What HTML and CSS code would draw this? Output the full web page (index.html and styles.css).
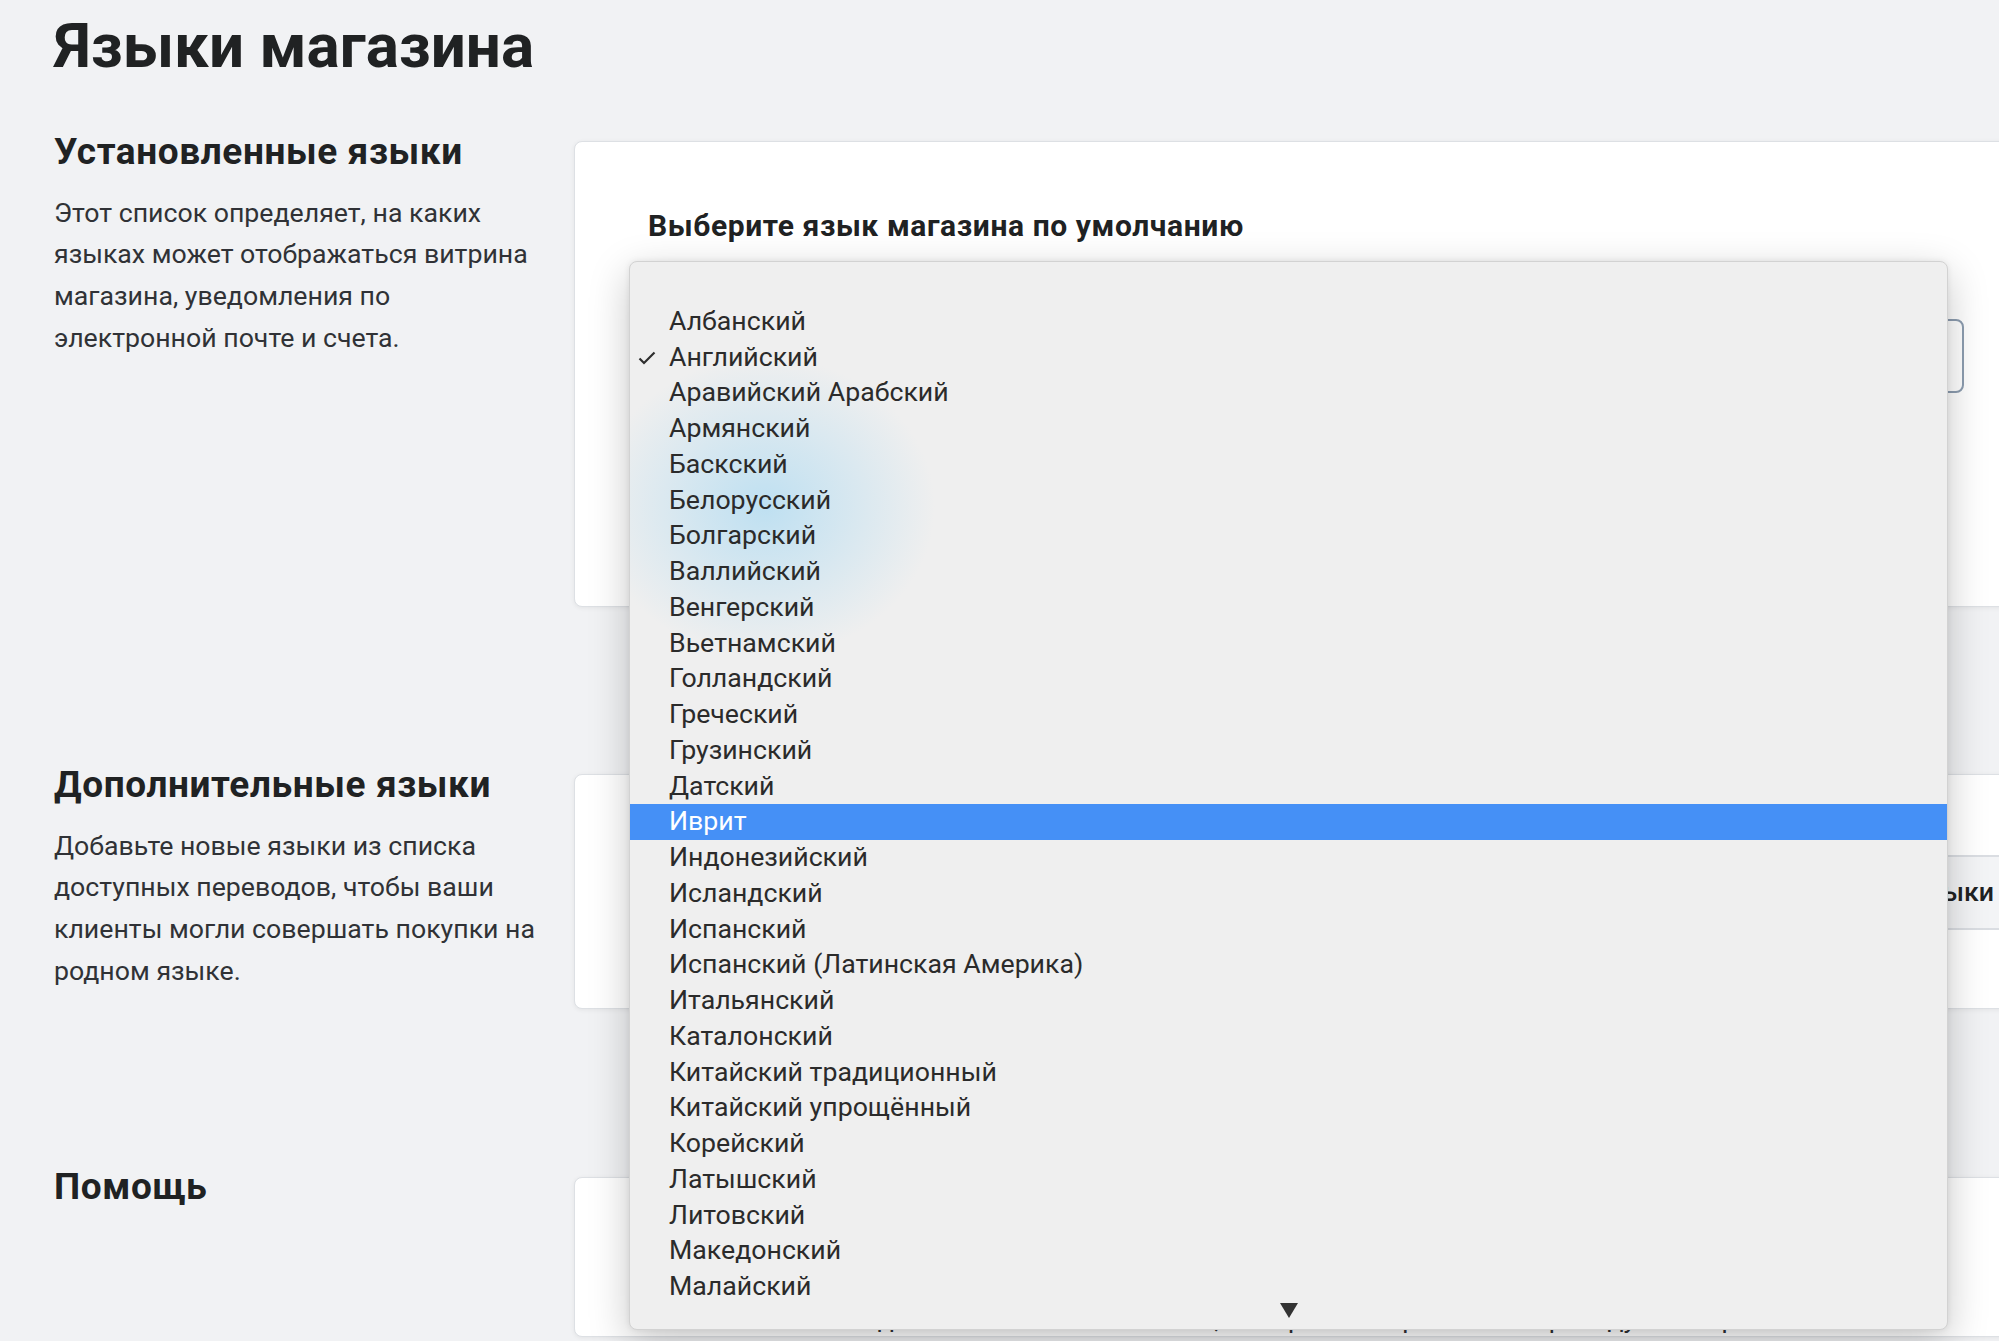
FILE: index.html
```html
<!doctype html>
<html lang="ru">
<head>
	<meta charset="UTF-8">
	<title>Языки магазина</title>
	<link rel="stylesheet" href="styles.css">
</head>
<body>
	<div class="page">
		<h1 class="page-title">Языки магазина</h1>

		<section class="row">
			<div class="aside">
				<h2>Установленные языки</h2>
				<p>Этот список определяет, на каких языках может отображаться витрина магазина, уведомления по электронной почте и счета.</p>
			</div>
			<div class="card card-default">
				<label class="field-label">Выберите язык магазина по умолчанию</label>
				<div class="select-box"></div>

				<!-- открытый список языков -->
				<ul class="popup">
					<li>Албанский</li>
					<li class="checked">
						<svg class="check" width="18" height="14" viewBox="0 0 18 14"><path d="M1.5 7.5 L6 12 L16.5 1.5" fill="none" stroke="#2e2e2e" stroke-width="2.2"/></svg>
						Английский
					</li>
					<li>Аравийский Арабский</li>
					<li>Армянский</li>
					<li>Баскский</li>
					<li>Белорусский</li>
					<li>Болгарский</li>
					<li>Валлийский</li>
					<li>Венгерский</li>
					<li>Вьетнамский</li>
					<li>Голландский</li>
					<li>Греческий</li>
					<li>Грузинский</li>
					<li>Датский</li>
					<li class="active">Иврит</li>
					<li>Индонезийский</li>
					<li>Исландский</li>
					<li>Испанский</li>
					<li>Испанский (Латинская Америка)</li>
					<li>Итальянский</li>
					<li>Каталонский</li>
					<li>Китайский традиционный</li>
					<li>Китайский упрощённый</li>
					<li>Корейский</li>
					<li>Латышский</li>
					<li>Литовский</li>
					<li>Македонский</li>
					<li>Малайский</li>
					<span class="more-arrow"></span>
				</ul>
			</div>
		</section>

		<section class="row">
			<div class="aside">
				<h2>Дополнительные языки</h2>
				<p>Добавьте новые языки из списка доступных переводов, чтобы ваши клиенты могли совершать покупки на родном языке.</p>
			</div>
			<div class="card card-extra">
				<div class="card-band">Добавить языки</div>
			</div>
		</section>

		<section class="row">
			<div class="aside">
				<h2>Помощь</h2>
			</div>
			<div class="card card-help">
				<p>Как добавить языки в магазин, смотрите в справке по переводу и настройке</p>
			</div>
		</section>
	</div>
</body>
</html>
```
FILE: styles.css
```css
/*复位*/
*{padding:0;margin:0;box-sizing:border-box;}
ul{list-style:none;}

html,body{width:100%;height:100%;}
body{
	background:#f1f2f4;
	color:#202223;
	font-family:Roboto,"Liberation Sans",sans-serif;
	overflow:hidden;
}
.page{padding:9px 0 0 54px;}
.page-title{
	font-size:62px;font-weight:700;line-height:1.2;
	margin-bottom:47px;
}

/*分区*/
.row{
	display:grid;
	grid-template-columns:520px 1464px;
	margin-bottom:156px;
	align-items:start;
}
.row:last-child{margin-bottom:0;}
.aside h2{
	font-size:37px;font-weight:700;line-height:1.2;
	letter-spacing:0.6px;
}
.aside p{
	width:488px;
	margin-top:18px;
	font-size:26.7px;line-height:41.6px;
	color:#303236;
}

.card{
	margin-top:11px;
	background:#fff;
	border:1px solid #dde0e4;
	border-radius:8px;
	box-shadow:0 1px 4px rgba(63,63,68,0.08);
	position:relative;
}
.card-default{height:466px;padding:66px 73px 0 73px;}
.field-label{
	display:block;
	font-size:30px;font-weight:700;line-height:36px;
	letter-spacing:0.6px;
}
.select-box{
	margin-top:75px;
	height:74px;
	border:2px solid #8d9db0;
	border-radius:8px;
}

.card-extra{height:235px;padding-top:80px;}
.card-band{
	margin-left:120px;
	height:75px;
	background:#f3f4f6;
	border-top:2px solid #dadde2;
	border-bottom:2px solid #dadde2;
	text-align:right;
	padding-right:43px;
	font-size:26.7px;font-weight:500;line-height:71px;
	color:#202223;
}

.card-help{margin-top:12px;height:160px;padding:121px 73px 0 250px;}
.card-help p{font-size:26.7px;line-height:41.6px;color:#303236;white-space:nowrap;}

/*下拉列表*/
.popup{
	position:absolute;
	left:54px;top:119px;
	width:1319px;height:1069px;
	z-index:10;
	overflow:hidden;
	padding-top:41.5px;
	background:
		radial-gradient(ellipse 170px 150px at 135px 245px,rgba(178,220,242,0.8),rgba(178,220,242,0) 100%),
		#efefef;
	border:1px solid #d2d2d2;
	border-radius:8px;
	box-shadow:0 12px 40px rgba(0,0,0,0.22),0 0 6px rgba(0,0,0,0.08);
}
.popup li{
	position:relative;
	height:35.75px;
	line-height:35.75px;
	padding-left:39px;
	font-size:26.7px;
	color:#2b2b2b;
	white-space:nowrap;
}
.popup li.active{background:#4590f6;color:#fff;}
.popup .check{position:absolute;left:8px;top:11px;}
.more-arrow{
	position:absolute;
	left:50%;bottom:11px;
	transform:translateX(-50%);
	width:0;height:0;
	border-left:9px solid transparent;
	border-right:9px solid transparent;
	border-top:15px solid #333;
}
```
